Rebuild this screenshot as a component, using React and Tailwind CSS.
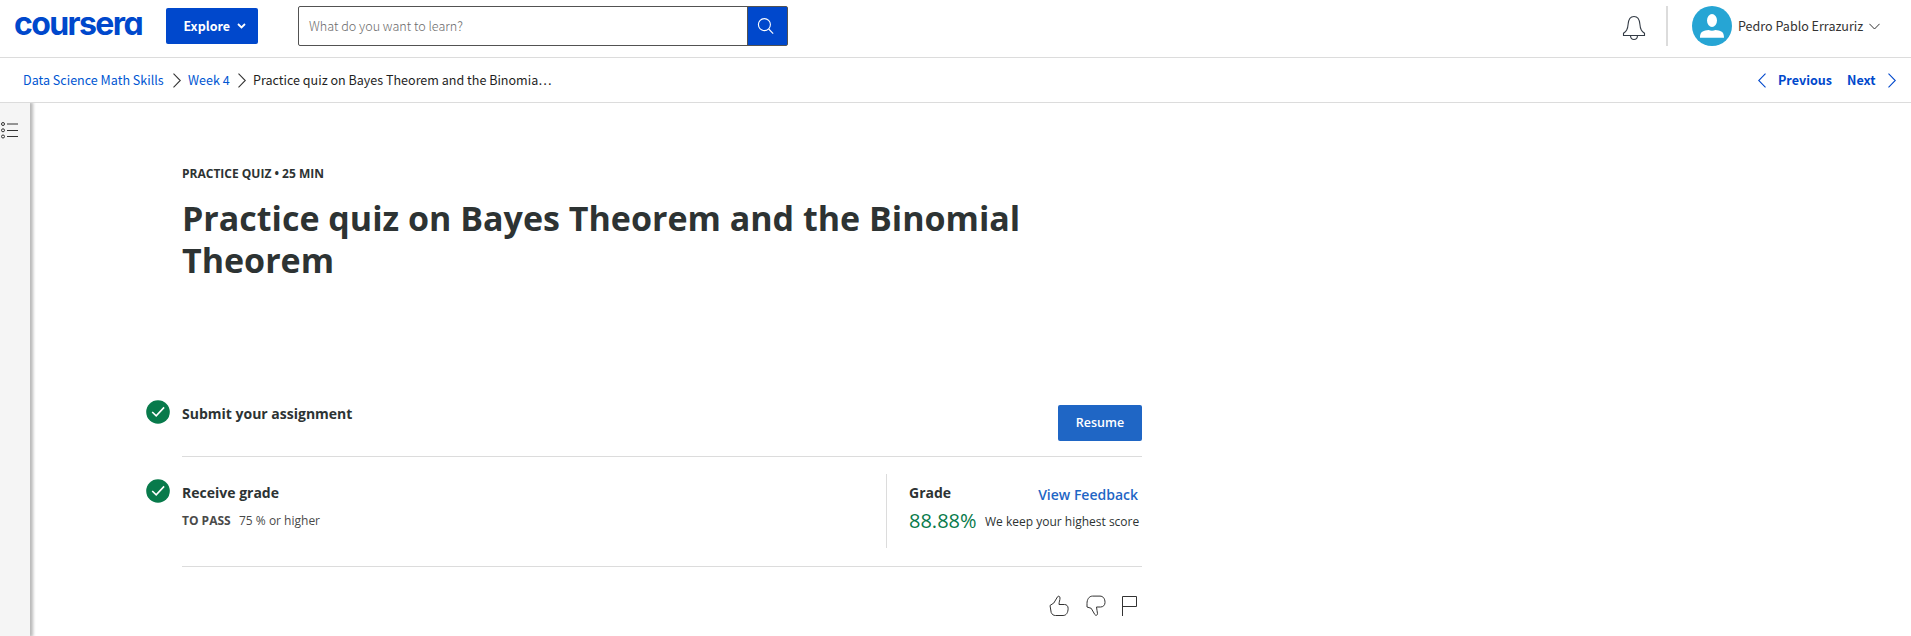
function Chevron({ className, d }) {
  return (
    <svg className={className} viewBox="0 0 8 15" fill="none" stroke="currentColor" strokeWidth="1.100">
      <path d={d} />
    </svg>
  );
}

function CheckBadge() {
  return (
    <svg className="h-6 w-6 shrink-0" viewBox="0 0 24 24" fill="none">
      <circle cx="12" cy="12" r="11.8" fill="#087a4b" />
      <path d="M6.200 12l4 3.900 7.900-8.500" stroke="#fff" strokeWidth="1.600" />
    </svg>
  );
}

function Header() {
  return (
    <header className="flex h-[58px] shrink-0 items-start border-b border-[#dcdcdc] font-['Noto_Sans_CJK_SC',sans-serif]">
      <div className="ml-[14px] mt-[9px] w-[128px] whitespace-nowrap font-['Inter',sans-serif] text-[32px] font-bold leading-[30px] tracking-[-1.600px] text-[#0048cc] [font-feature-settings:'cv11','ss01']">
        coursera
      </div>
      <button className="ml-[24px] mt-2 flex h-9 w-[92px] items-center rounded-[2px] bg-[#0048cc] pl-[17.500px] text-[12.5px] font-bold leading-4 text-white">
        <span className="w-[46px]">Explore</span>
        <svg className="ml-[7px] h-[6px] w-[9px]" viewBox="0 0 9 6" fill="none" stroke="#fff" strokeWidth="1.8">
          <path d="M1 1l3.5 3.4L8 1" />
        </svg>
      </button>
      <div className="ml-[40px] mt-[6px] flex h-10 w-[490px] rounded-[2px] border border-[#525252]">
        <div className="flex flex-1 items-center pl-[10px] text-[12.6px] font-light leading-4 text-[#6b6b6b]">
          <span>What do you want to learn?</span>
        </div>
        <div className="flex w-[40px] items-start border-l border-[#525252] bg-[#0048cc] pl-[9px] pt-[10px]">
          <svg className="h-[18px] w-[18px]" viewBox="0 0 18 18" fill="none" stroke="#fff" strokeWidth="1.1">
            <circle cx="7.4" cy="7.6" r="6" />
            <path d="M11.7 12l4.5 4.6" />
          </svg>
        </div>
      </div>
      <svg className="ml-auto mt-[15px] h-[26px] w-6" viewBox="0 0 24 26" fill="none" stroke="#333b45" strokeWidth="1.100">
        <path d="M1.500 20.500h21v-2.200c-2.800-2.200-4.200-3.600-4.600-9C17.500 4 15.200 1.500 12 1.500S6.500 4 6.100 9.300c-.4 5.400-1.800 6.800-4.600 9z" />
        <path d="M8.500 20.700c.2 2.400 1.600 3.800 3.500 3.800s3.300-1.400 3.500-3.800" />
      </svg>
      <div className="ml-[20px] mt-[6px] h-10 w-[2px] bg-[#dcdcdc]" />
      <svg className="ml-[24px] mt-[6px] h-10 w-10" viewBox="0 0 40 40">
        <circle cx="20" cy="20" r="20" fill="#26a5d4" />
        <ellipse cx="20" cy="14.500" rx="5" ry="6.400" fill="#fff" />
        <path d="M8 31.800c0-4.300 1.400-6.300 5.200-7.200 1.200-.3 2.300-.5 3.400-.5 2 .9 4.800.9 6.800 0 1.100 0 2.200.2 3.400.5 3.800.9 5.200 2.900 5.200 7.200z" fill="#fff" />
      </svg>
      <div className="ml-[6px] mt-[18px] w-[126px] whitespace-nowrap text-[12.55px] leading-4 text-[#333]">
        Pedro Pablo Errazuriz
      </div>
      <svg className="ml-[5px] mr-[31px] mt-[23px] h-[7px] w-[11px]" viewBox="0 0 11 7" fill="none" stroke="#333" strokeWidth="1">
        <path d="M.4.8l5.100 5.200L10.600.8" />
      </svg>
    </header>
  );
}

function Breadcrumbs() {
  return (
    <nav className="flex h-[45px] shrink-0 items-center border-b border-[#dcdcdc] pl-[23px] pr-[15px] font-['Noto_Sans_CJK_SC',sans-serif] text-[12.55px] leading-4 text-[#0056d2]">
      <span className="w-[141px] whitespace-nowrap">Data Science Math Skills</span>
      <Chevron className="ml-[9px] h-[15px] w-2 text-[#333]" d="M.5.700l6.800 6.800-6.800 6.800" />
      <span className="ml-[7px] w-[43px] whitespace-nowrap">Week 4</span>
      <Chevron className="ml-[7px] h-[15px] w-2 text-[#333]" d="M.5.700l6.800 6.800-6.800 6.800" />
      <span className="ml-[7px] whitespace-nowrap text-[#1f1f1f]">Practice quiz on Bayes Theorem and the Binomia…</span>
      <Chevron className="ml-auto h-[15px] w-2 text-[#0048cc]" d="M7.500.700L.7 7.500l6.800 6.800" />
      <span className="ml-[12px] w-[54px] whitespace-nowrap font-bold text-[#0048cc]">Previous</span>
      <span className="ml-[15px] w-[29px] whitespace-nowrap font-bold text-[#0048cc]">Next</span>
      <Chevron className="ml-[12px] h-[15px] w-2 text-[#0048cc]" d="M.5.700l6.800 6.800-6.800 6.800" />
    </nav>
  );
}

function Sidebar() {
  return (
    <aside className="z-10 w-[30px] shrink-0 bg-[#f5f5f5] pt-[18px] shadow-[2px_0_3px_1px_rgba(0,0,0,0.28)]">
      <svg className="h-[19px] w-[19px]" viewBox="0 0 19 19" fill="none" stroke="#333">
        <circle cx="3" cy="3" r="1.500" />
        <circle cx="3" cy="9.300" r="1.500" />
        <circle cx="3" cy="15.500" r="1.500" />
        <path d="M7 3h11M7 9.500h11M7 15.500h11" />
      </svg>
    </aside>
  );
}

function FeedbackIcons() {
  return (
    <div className="flex items-start justify-end pr-[4px] pt-[28px] text-[#333]">
      <svg className="h-[22px] w-5" viewBox="0 0 20 22" fill="none" stroke="currentColor" strokeWidth="1">
        <path d="M10 9.500h5.500c2.200 0 3.600 1.600 3.600 3.800 0 4.200-1.700 7.200-5 7.200H6.500c-2 0-3.500-1-4.300-3L1 10.500 4.800 8 8.600 1.700c.6-.9 2.400-.6 2.400 1.200 0 2.500-1 3.800-1 6.600z" />
      </svg>
      <svg className="ml-[17px] h-[22px] w-5" viewBox="0 0 20 22" fill="none" stroke="currentColor" strokeWidth="1">
        <path d="M10.500 12h4c2.700 0 4.500-1.800 4.500-4.500 0-4-2-6.400-5-6.400H6.500C3 1.100 1 4.500 1 8.500V12l4.200 1.300 3.600 6.200c.8 1.400 2.700.9 2.700-.8 0-2.600-1-4-1-6.700z" />
      </svg>
      <svg className="ml-[16px] h-[22px] w-4" viewBox="0 0 16 22" fill="none" stroke="currentColor" strokeWidth="1">
        <path d="M.5 21V1.500h14v10H.5" />
      </svg>
    </div>
  );
}

function Quiz() {
  return (
    <main className="ml-[116px] w-[996px] font-['Open_Sans',sans-serif] text-[#2d3333]">
      <div className="pl-9 pt-[62px]">
        <p className="text-[12px] font-bold leading-[18px]">PRACTICE QUIZ • 25 MIN</p>
        <h1 className="mt-[14px] w-[900px] text-[34px] font-bold leading-[42px]">
          Practice quiz on Bayes Theorem and the Binomial Theorem
        </h1>
      </div>
      <section className="mt-[117px] flex h-[59px]">
        <div className="pt-[2px]"><CheckBadge /></div>
        <div className="ml-3 flex flex-1 items-start border-b border-[#dcdcdc]">
          <h2 className="pt-[6px] text-[14px] font-bold leading-5">Submit your assignment</h2>
          <button className="ml-auto mt-[7px] h-9 w-[84px] rounded-[2px] bg-[#1f66c5] text-[12.5px] font-semibold leading-5 text-white">
            Resume
          </button>
        </div>
      </section>
      <section className="flex h-[110px]">
        <div className="pt-[22px]"><CheckBadge /></div>
        <div className="ml-3 flex flex-1 items-start border-b border-[#dcdcdc]">
          <div className="pt-[26px]">
            <h2 className="text-[14px] font-bold leading-5">Receive grade</h2>
            <p className="mt-[9px] flex text-[12px] leading-[18px] text-[#4a4a4a]">
              <span className="w-[57px] font-bold">TO PASS</span>
              <span>75 % or higher</span>
            </p>
          </div>
          <div className="ml-auto mt-[17px] h-[74px] w-[256px] border-l border-[#dcdcdc] pl-[22px]">
            <div className="flex justify-between pr-1 pt-[9px]">
              <span className="text-[14px] font-bold leading-5">Grade</span>
              <span className="mt-[2px] text-[14px] font-semibold leading-5 text-[#1f66c5]">View Feedback</span>
            </div>
            <div className="flex whitespace-nowrap">
              <span className="w-[76px] pt-px text-[20px] leading-[30px] text-[#087a4b]">88.88%</span>
              <span className="pt-[8px] text-[12px] leading-[18px]">We keep your highest score</span>
            </div>
          </div>
        </div>
      </section>
      <FeedbackIcons />
    </main>
  );
}

export default function App() {
  return (
    <div className="flex h-[636px] w-full flex-col overflow-hidden bg-white">
      <Header />
      <Breadcrumbs />
      <div className="flex min-h-0 flex-1 overflow-hidden">
        <Sidebar />
        <Quiz />
      </div>
    </div>
  );
}
